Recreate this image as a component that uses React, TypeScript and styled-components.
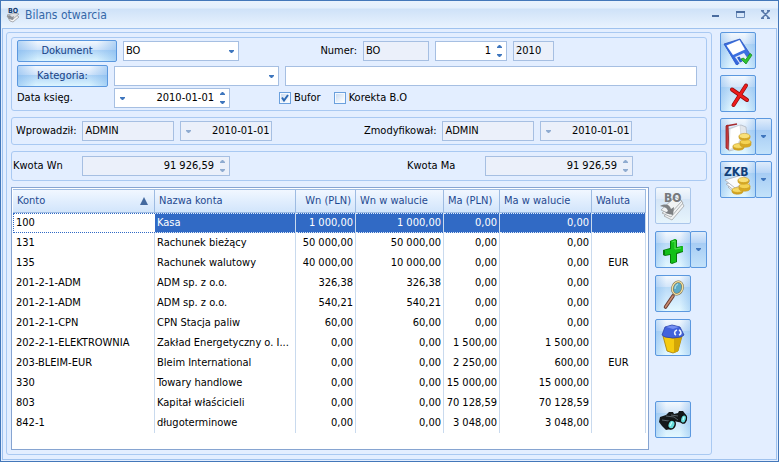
import React from "react";
import styled, { createGlobalStyle, css } from "styled-components";

const line = "#a9c9f2";
const fieldLine = "#a6bfe2";

const GlobalStyle = createGlobalStyle`
  *, *::before, *::after { box-sizing: border-box; }
  body { margin: 0; background: #e3eeff; }
  body, button, input, select, table {
    font-family: "DejaVu Sans Condensed", "DejaVu Sans", Tahoma, sans-serif;
    font-stretch: condensed;
    font-size: 11px;
    line-height: 14px;
    color: #000;
  }
`;

const Window = styled.main`
  display: flex;
  flex-direction: column;
  min-height: 100vh;
  border: 1px solid #4377b9;
  background: #e3eeff;
`;

const TitleBar = styled.header`
  display: flex;
  align-items: center;
  height: 27px;
  padding: 0 8px 0 5px;
  background: linear-gradient(#e9f2fd 0, #e3effc 7px, #cfe2f8 8px, #e9f3fe 100%);
`;

const Title = styled.h1`
  flex: 1;
  margin: 0 0 0 5px;
  font-size: 12px;
  line-height: 18px;
  font-weight: normal;
  color: #3468a8;
`;

const CaptionButton = styled.button`
  display: flex;
  width: 25px;
  height: 16px;
  padding: 0;
  justify-content: flex-end;
  align-items: center;
  border: 0;
  background: none;
`;

const Body = styled.div`
  flex: 1;
  display: flex;
  gap: 8px;
  margin: 0 1px 1px;
  padding: 3px 4px 4px 3px;
  border: 1px solid #9fc2ee;
`;

const Panel = styled.section`
  flex: 1;
  min-width: 0;
  display: flex;
  flex-direction: column;
  gap: 6px;
  padding: 4px;
  border: 1px solid ${line};
  border-radius: 3px;
`;

const Group = styled.div<{ $pad: string }>`
  padding: ${(p) => p.$pad};
  border: 1px solid ${line};
  border-radius: 3px;
`;

const Row = styled.div<{ $height?: number; $top?: number }>`
  display: flex;
  align-items: center;
  gap: 6px;
  height: ${(p) => p.$height ?? 20}px;
  margin-top: ${(p) => p.$top ?? 0}px;
`;

const Label = styled.label<{ $width: number; $right?: boolean; $indent?: number }>`
  flex: 0 0 ${(p) => p.$width}px;
  margin-left: ${(p) => p.$indent ?? 0}px;
  text-align: ${(p) => (p.$right ? "right" : "left")};
  white-space: nowrap;
`;

const glass = css`
  border: 1px solid #5b98df;
  border-radius: 2px;
  background:
    linear-gradient(90deg, rgba(120, 178, 236, 0.4) 0, rgba(120, 178, 236, 0) 30%, rgba(120, 178, 236, 0) 70%, rgba(120, 178, 236, 0.4) 100%),
    linear-gradient(#f4f9fe 0, #d4e6fa 30%, #b9daf7 31%, #cbe6fb 60%, #e3f8ff 100%);
`;

const TextButton = styled.button<{ $width: number }>`
  ${glass}
  flex: 0 0 ${(p) => p.$width}px;
  height: 22px;
  padding: 0;
  color: #173f85;
  background:
    linear-gradient(90deg, rgba(120, 178, 236, 0.5) 0, rgba(120, 178, 236, 0) 20%, rgba(120, 178, 236, 0) 80%, rgba(120, 178, 236, 0.5) 100%),
    linear-gradient(#f3f8fe 0, #cfe3fa 45%, #aed3f6 46%, #dcf5ff 100%);
`;

const Field = styled.div<{ $width?: number; $readOnly?: boolean }>`
  display: flex;
  align-items: stretch;
  flex: ${(p) => (p.$width ? `0 0 ${p.$width}px` : "1 1 0")};
  min-width: 0;
  height: 20px;
  border: 1px solid ${fieldLine};
  background: ${(p) => (p.$readOnly ? "#ebf0fa" : "#fff")};
  color: ${(p) => (p.$readOnly ? "#8fabd0" : "#3f76bd")};
`;

const Text = styled.input<{ $right?: boolean }>`
  flex: 1;
  width: 0;
  min-width: 0;
  padding: 0 2px;
  border: 0;
  background: none;
  text-align: ${(p) => (p.$right ? "right" : "left")};
  outline: none;
`;

const Choice = styled.select`
  grid-area: 1 / 1;
  width: 100%;
  padding: 0 16px 0 2px;
  border: 0;
  background: none;
  appearance: none;
  outline: none;
`;

const ChoiceField = styled(Field)`
  display: grid;
  grid-template: 1fr / 1fr;
  svg {
    grid-area: 1 / 1;
    place-self: center end;
    margin-right: 4px;
    pointer-events: none;
  }
`;

const DropButton = styled.button`
  display: flex;
  align-items: center;
  justify-content: center;
  width: 14px;
  padding: 0;
  border: 0;
  background: none;
  color: inherit;
`;

const Spin = styled.span`
  display: flex;
  flex-direction: column;
  justify-content: center;
  gap: 4px;
  width: 13px;
  color: inherit;
`;

const SpinButton = styled.button`
  display: flex;
  justify-content: center;
  height: 5px;
  align-items: center;
  padding: 0;
  border: 0;
  background: none;
  color: inherit;
`;

const Check = styled.label<{ $indent: number }>`
  display: flex;
  align-items: center;
  gap: 3px;
  margin-left: ${(p) => p.$indent}px;
  white-space: nowrap;
`;

const CheckBox = styled.input`
  appearance: none;
  width: 12px;
  height: 12px;
  margin: 0;
  border: 1px solid #6ba0dd;
  background: linear-gradient(135deg, #cbdcf1, #fff) content-box, #f4f9ff;
  padding: 1px;
`;

const CheckStack = styled.span`
  display: grid;
  > * { grid-area: 1 / 1; }
  svg { pointer-events: none; }
`;

const Lower = styled.div`
  flex: 1;
  display: flex;
  gap: 6px;
`;

const GridBox = styled.div`
  flex: 1;
  min-width: 0;
  padding: 1px 2px 0 1px;
  border: 1px solid #86a4d1;
  background: #fff;
`;

const Grid = styled.table`
  width: 100%;
  table-layout: fixed;
  border-collapse: separate;
  border-spacing: 0;
`;

const Head = styled.th<{ $right?: boolean }>`
  height: 24px;
  padding: 0 4px;
  border: solid #9dbbe2;
  border-width: 1px 1px 1px 0;
  background: linear-gradient(#f1f7ff, #deecfd 60%, #d2e5fb);
  color: #1f4990;
  font-weight: normal;
  text-align: ${(p) => (p.$right ? "right" : "left")};
  white-space: nowrap;
`;

const HeadSort = styled.span`
  display: flex;
  justify-content: space-between;
  align-items: center;
  padding-right: 2px;
`;

type Align = "left" | "right" | "center";

const Cell = styled.td<{ $align: Align; $state?: "focus" | "selected" }>`
  height: 20px;
  padding: ${(p) => (p.$align === "right" ? "0 2px 0 0" : "0 2px")};
  border-right: 1px solid #c9daee;
  text-align: ${(p) => p.$align};
  white-space: nowrap;
  overflow: hidden;
  text-overflow: ${(p) => (p.$align === "left" ? "ellipsis" : "clip")};
  &:first-child { padding-left: 3px; }
  ${(p) =>
    p.$state === "selected" &&
    css`
      background: #316ac5;
      color: #fff;
      border-top: 1px dotted #dce8f8;
      border-bottom: 1px dotted #dce8f8;
    `}
  ${(p) =>
    p.$state === "focus" &&
    css`
      border: 1px dotted #316ac5;
      border-right: 0;
      &:first-child { padding-left: 2px; }
    `}
`;

const SideColumn = styled.div`
  flex: 0 0 52px;
  display: flex;
  flex-direction: column;
  align-items: flex-start;
  gap: 7px;
  padding-bottom: 12px;
`;

const ActionColumn = styled.nav`
  flex: 0 0 52px;
  display: flex;
  flex-direction: column;
  align-items: flex-start;
  gap: 6px;
`;

const Split = styled.div<{ $last?: boolean }>`
  display: flex;
  margin-top: ${(p) => (p.$last ? "auto" : 0)};
`;

const IconButton = styled.button<{ $muted?: boolean }>`
  ${glass}
  display: flex;
  align-items: center;
  justify-content: center;
  width: 36px;
  height: 37px;
  padding: 0;
  ${(p) =>
    p.$muted &&
    css`
      border-color: #aac6ea;
      background: linear-gradient(#f3f8fd 0, #e0ebf8 30%, #d5e5f6 31%, #e6f4fc 100%);
    `}
`;

const SplitArrow = styled(IconButton)`
  width: 17px;
  margin-left: -1px;
  color: #3f76bd;
  background: linear-gradient(#dfecfb 0, #b9d6f7 30%, #a6ccf4 31%, #c3e2fa 100%);
`;

const Down = () => (
  <svg width="5" height="3" viewBox="0 0 5 3" fill="currentColor"><path d="M0 0h5v1L3 3H2L0 1z" /></svg>
);
const Up = () => (
  <svg width="5" height="3" viewBox="0 0 5 3" fill="currentColor"><path d="M0 3h5V2L3 0H2L0 2z" /></svg>
);

const Coins = () => (
  <g stroke="#c79c25" strokeWidth=".6">
    <path d="M10 26v2c1 3 10 3 11 0v-2z" fill="#d3a21b" />
    <ellipse cx="15.500" cy="26" rx="5.500" ry="2.400" fill="#f6da66" />
    <path d="M17 22v3c1 3 10 3 11 0v-3z" fill="#d9aa20" />
    <ellipse cx="22.500" cy="22" rx="5.500" ry="2.600" fill="#f4d353" />
    <path d="M16 16v2c1 3 10 3 11 0v-2z" fill="#d9aa20" />
    <ellipse cx="21.500" cy="16" rx="5.500" ry="2.600" fill="#f9e078" />
  </g>
);

const DiskIcon = () => (
  <svg width="32" height="32" viewBox="0 0 32 32">
    <path d="M2 9 18 4l10 15-13 11z" fill="#3c70e0" stroke="#2853bd" strokeWidth=".8" />
    <path d="m2 9 12 21 2-1L4 10z" fill="#3567d8" />
    <path d="M4.500 10.500 17.500 5 23 14.500 11 20z" fill="#fff" />
    <path d="m13 22 9-4 4 6-8 5z" fill="#e8eefb" />
    <path d="m15 22.500 2.500-1 3 5-2.500 1z" fill="#2c5fca" />
    <path d="m19 24 2.500-1 2 2L28 18.500l2 1.500-6 9z" fill="#2fc430" stroke="#168b20" strokeWidth=".8" />
  </svg>
);

const CrossIcon = () => (
  <svg width="32" height="32" viewBox="0 0 32 32" fill="none" strokeLinecap="round">
    <path d="M10 11.500 25 22" stroke="#8f0d0d" strokeWidth="4" />
    <path d="M24 7.500 11.500 27" stroke="#8f0d0d" strokeWidth="4" />
    <path d="M10 11.500 25 22" stroke="#ed1c1c" strokeWidth="2.600" />
    <path d="M24 7.500 11.500 27" stroke="#ed1c1c" strokeWidth="2.600" />
  </svg>
);

const BookIcon = () => (
  <svg width="32" height="32" viewBox="0 0 32 32">
    <path d="m6 8 13-4 5 2 2 19-19 5z" fill="#e3e7ec" stroke="#a9b0ba" strokeWidth=".7" />
    <path d="m4 5 2-1 1 25-3-2z" fill="#c63b3b" stroke="#8e1d22" strokeWidth=".8" />
    <path d="M4 5 15 3" stroke="#a62a2d" strokeWidth="1.500" />
    <path d="M7 29 8 8l10-4 1 12-4 9z" fill="#fff" stroke="#c6ccd4" strokeWidth=".6" />
    <g transform="translate(1 -1)"><Coins /></g>
  </svg>
);

const ZkbIcon = () => (
  <svg width="32" height="32" viewBox="0 0 32 32">
    <g stroke="#a4a9b2" strokeWidth=".8" fill="#fafcff">
      <path d="m6 23 15-6 7 6-14 7z" />
      <path d="m4 20 16-6 8 6-15 7z" />
      <path d="m3 16 17-5 8 6-15 7z" />
    </g>
    <Coins />
    <text x="2" y="12" fontFamily="DejaVu Sans" fontSize="12" fontWeight="bold" fill="#123f79">ZKB</text>
  </svg>
);

const BoIcon = () => (
  <svg width="32" height="32" viewBox="0 0 32 32">
    <g fill="#f1f3f4" stroke="#a0a3a6" strokeWidth=".8">
      <path d="m7 26 8 4 12-14-3-5z" />
      <path d="m5 23 9 4 12-14-3-4z" />
      <path d="m4 20 9 4 12-13-7-4z" />
    </g>
    <path d="M3 16c6-3 10-1 11 3l3-2-1 8-8-2 3-2c-1-3-3-4-8-5z" fill="#7d8083" />
    <text x="7" y="12" fontFamily="DejaVu Sans" fontSize="12" fontWeight="bold" fill="#76797c">BO</text>
  </svg>
);

const PlusIcon = () => (
  <svg width="32" height="32" viewBox="0 0 32 32">
    <path d="m13 7 5-2 2 1v7l5-1 1 1v5l-6 2v8l-5 2-2-1v-8l-5 1-2-1v-5l7-2z" fill="#087a0b" />
    <path d="m14 7 5-2v9l7-2v5l-7 2v9l-5 1v-9l-6 1v-5l6-1z" fill="#13c019" />
    <path d="m15 8 3-1v8l6-1" fill="none" stroke="#54df50" />
  </svg>
);

const LensIcon = () => (
  <svg width="32" height="32" viewBox="0 0 32 32">
    <path d="M16 18 8.500 29" stroke="#683d32" strokeWidth="3.600" strokeLinecap="round" />
    <path d="M16 18 8.500 29" stroke="#c98c70" strokeWidth="1.600" strokeLinecap="round" />
    <ellipse cx="20.500" cy="10" rx="5" ry="6.500" transform="rotate(20 20.500 10)" fill="#5aa9c6" stroke="#736849" strokeWidth="2.400" />
    <ellipse cx="20.500" cy="10" rx="5" ry="6.500" transform="rotate(20 20.500 10)" fill="none" stroke="#f0dfa0" strokeWidth="1.400" />
    <path d="M18 11c0-3 1-4 3-5" fill="none" stroke="#a4dbe8" strokeWidth="1.200" />
  </svg>
);

const BinIcon = () => (
  <svg width="32" height="32" viewBox="0 0 32 32">
    <path d="m6 14 10 2 9-2-4 15-5 2-6-2z" fill="#f5cb10" stroke="#a47c08" strokeWidth=".8" />
    <path d="m17 16 8-2-4 15-4 2z" fill="#d3a606" />
    <path d="M5 13 8 5l7-2 8 2 4 8-3 2-8 1-8-1z" fill="#4263dc" stroke="#2b41a5" strokeWidth=".8" />
    <path d="m9 5 6-1.500L22 5l-6 2z" fill="#7590f2" />
    <path d="M20 8c-3 1-3 4-1 5m3 0c3-1 2-4 0-5" fill="none" stroke="#eef5ff" strokeWidth="1.600" />
  </svg>
);

const BinocularsIcon = () => (
  <svg width="32" height="32" viewBox="0 0 32 32">
    <path d="m3 13 6-2 3-3h4l1 2 4-1 1-2h4l3 4 1 5-3 3-6-1-4-1-3 8-5 1-4-4-3-4z" fill="#14181b" />
    <path d="m9 12 8 1 4 3m-16 0 7 1 6 1m-4-7 7 1" fill="none" stroke="#59636a" strokeWidth="1" />
    <ellipse cx="14.500" cy="20.500" rx="3.600" ry="4.600" transform="rotate(20 14.500 20.500)" fill="#64dddd" stroke="#111" strokeWidth="1.500" />
    <ellipse cx="26.500" cy="15" rx="2.800" ry="4.200" transform="rotate(15 26.500 15)" fill="#64dddd" stroke="#111" strokeWidth="1.200" />
    <path d="m13 22 2-4m11-2 1-3" stroke="#c9ffff" strokeWidth="1.200" />
  </svg>
);

const AppIcon = () => (
  <svg width="14" height="16" viewBox="0 0 14 16">
    <path d="m1 9 8-2 4 3-6 5-3-1z" fill="#f4f4f4" stroke="#9a9da2" strokeWidth=".8" />
    <path d="m1 8 4 4 2 0 6-5-5-1z" fill="#dfe1e4" stroke="#9a9da2" strokeWidth=".8" />
    <path d="M1 9c3-2 4 0 5 1l2-1-1 4-4-1" fill="#8c9096" />
    <text x="2" y="6" fontFamily="DejaVu Sans" fontSize="7" fontWeight="bold" fill="#173e70">BO</text>
  </svg>
);

const Spinner = () => (
  <Spin>
    <SpinButton type="button" aria-label="Zwiększ"><Up /></SpinButton>
    <SpinButton type="button" aria-label="Zmniejsz"><Down /></SpinButton>
  </Spin>
);

type BoxProps = { id?: string; name: string; value: string; width?: number; readOnly?: boolean; right?: boolean; drop?: boolean; spin?: boolean };

const Box = ({ id, name, value, width, readOnly, right, drop, spin }: BoxProps) => (
  <Field $width={width} $readOnly={readOnly}>
    {drop && <DropButton type="button" aria-label="Kalendarz"><Down /></DropButton>}
    <Text id={id} aria-label={id ? undefined : name} defaultValue={value} readOnly={readOnly} $right={right} />
    {spin && <Spinner />}
  </Field>
);

const Tick = ({ label, checked, indent }: { label: string; checked?: boolean; indent: number }) => (
  <Check $indent={indent}>
    <CheckStack>
      <CheckBox type="checkbox" defaultChecked={checked} />
      {checked && (
        <svg width="12" height="12" viewBox="0 0 12 12"><path d="m3 5.500 2 3L9 3" fill="none" stroke="#2c69b4" strokeWidth="2" /></svg>
      )}
    </CheckStack>
    {label}
  </Check>
);

const ActionButton = ({ label, icon, split, muted, last }: { label: string; icon: React.ReactNode; split?: boolean; muted?: boolean; last?: boolean }) => (
  <Split $last={last}>
    <IconButton type="button" aria-label={label} $muted={muted} disabled={muted}>{icon}</IconButton>
    {split && <SplitArrow type="button" aria-label={`${label}: opcje`}><Down /></SplitArrow>}
  </Split>
);

const widths = [142, 141, 60, 88, 56, 92, 54];
const heads = ["Konto", "Nazwa konta", "Wn (PLN)", "Wn w walucie", "Ma (PLN)", "Ma w walucie", "Waluta"];
const aligns: Align[] = ["left", "left", "right", "right", "right", "right", "center"];
const rows = [
  ["100", "Kasa", "1 000,00", "1 000,00", "0,00", "0,00", ""],
  ["131", "Rachunek bieżący", "50 000,00", "50 000,00", "0,00", "0,00", ""],
  ["135", "Rachunek walutowy", "40 000,00", "10 000,00", "0,00", "0,00", "EUR"],
  ["201-2-1-ADM", "ADM sp. z o.o.", "326,38", "326,38", "0,00", "0,00", ""],
  ["201-2-1-ADM", "ADM sp. z o.o.", "540,21", "540,21", "0,00", "0,00", ""],
  ["201-2-1-CPN", "CPN Stacja paliw", "60,00", "60,00", "0,00", "0,00", ""],
  ["202-2-1-ELEKTROWNIA", "Zakład Energetyczny o. I...", "0,00", "0,00", "1 500,00", "1 500,00", ""],
  ["203-BLEIM-EUR", "Bleim International", "0,00", "0,00", "2 250,00", "600,00", "EUR"],
  ["330", "Towary handlowe", "0,00", "0,00", "15 000,00", "15 000,00", ""],
  ["803", "Kapitał właścicieli", "0,00", "0,00", "70 128,59", "70 128,59", ""],
  ["842-1", "długoterminowe", "0,00", "0,00", "3 048,00", "3 048,00", ""],
];

export default function App() {
  return (
    <>
      <GlobalStyle />
      <Window>
        <TitleBar>
          <AppIcon />
          <Title>Bilans otwarcia</Title>
          <CaptionButton type="button" aria-label="Minimalizuj">
            <svg width="9" height="9" viewBox="0 0 9 9"><path d="M1 5h7v2H1z" fill="#4a6c9f" /></svg>
          </CaptionButton>
          <CaptionButton type="button" aria-label="Maksymalizuj">
            <svg width="9" height="9" viewBox="0 0 9 9"><path d="M.5 1.500h8v6h-8z" fill="none" stroke="#6c8cb9" /><path d="M0 1h9v2H0z" fill="#4a6c9f" /></svg>
          </CaptionButton>
          <CaptionButton type="button" aria-label="Zamknij">
            <svg width="9" height="9" viewBox="0 0 9 9"><path d="m1 1 7 7M8 1 1 8M0 .7h3M6 .7h3M0 8.300h3M6 8.300h3" fill="none" stroke="#5777a8" strokeWidth="1.500" /></svg>
          </CaptionButton>
        </TitleBar>
        <Body>
          <Panel>
            <Group $pad="2px 9px 2px 5px">
              <Row $height={22}>
                <TextButton type="button" $width={100}>Dokument</TextButton>
                <ChoiceField $width={116}>
                  <Choice aria-label="Dokument" defaultValue="BO"><option>BO</option></Choice>
                  <Down />
                </ChoiceField>
                <Label htmlFor="series" $width={112} $right>Numer:</Label>
                <Box id="series" name="Seria" value="BO" width={66} readOnly />
                <Box name="Numer" value="1" width={72} right spin />
                <Box name="Rok" value="2010" width={41} readOnly />
              </Row>
              <Row $height={22} $top={3}>
                <TextButton type="button" $width={91}>Kategoria:</TextButton>
                <ChoiceField $width={165}>
                  <Choice aria-label="Kategoria" defaultValue=""><option value="" /></Choice>
                  <Down />
                </ChoiceField>
                <Box name="Opis kategorii" value="" />
              </Row>
              <Row $top={1}>
                <Label htmlFor="date" $width={91}>Data księg.</Label>
                <Box id="date" name="Data" value="2010-01-01" width={116} right drop spin />
                <Tick label="Bufor" checked indent={43} />
                <Tick label="Korekta B.O" indent={7} />
              </Row>
            </Group>
            <Group $pad="3px 4px">
              <Row>
                <Label htmlFor="created" $width={60}>Wprowadził:</Label>
                <Box id="created" name="Wprowadził" value="ADMIN" width={92} readOnly />
                <Box name="Data wprowadzenia" value="2010-01-01" width={92} readOnly right drop />
                <Label htmlFor="changed" $width={158} $right>Zmodyfikował:</Label>
                <Box id="changed" name="Zmodyfikował" value="ADMIN" width={92} readOnly />
                <Box name="Data modyfikacji" value="2010-01-01" width={92} readOnly right drop />
              </Row>
            </Group>
            <Group $pad="4px 1px">
              <Row>
                <Label htmlFor="debit" $width={63}>Kwota Wn</Label>
                <Box id="debit" name="Kwota Wn" value="91 926,59" width={148} readOnly right spin />
                <Label htmlFor="credit" $width={72} $indent={171}>Kwota Ma</Label>
                <Box id="credit" name="Kwota Ma" value="91 926,59" width={148} readOnly right spin />
              </Row>
            </Group>
            <Lower>
              <GridBox>
                <Grid>
                  <colgroup>{widths.map((w, i) => <col key={i} width={w} />)}</colgroup>
                  <thead>
                    <tr>
                      {heads.map((h, i) => (
                        <Head key={h} scope="col" $right={i === 2}>
                          {i === 0 ? (
                            <HeadSort>{h}<svg width="8" height="8" viewBox="0 0 8 8"><path d="M4 0 8 8H0z" fill="#44699f" /></svg></HeadSort>
                          ) : h}
                        </Head>
                      ))}
                    </tr>
                  </thead>
                  <tbody>
                    {rows.map((r, ri) => (
                      <tr key={ri}>
                        {r.map((c, i) => (
                          <Cell key={i} $align={aligns[i]} $state={ri === 0 ? (i === 0 ? "focus" : "selected") : undefined}>{c}</Cell>
                        ))}
                      </tr>
                    ))}
                  </tbody>
                </Grid>
              </GridBox>
              <SideColumn>
                <ActionButton label="Bilans otwarcia" icon={<BoIcon />} muted />
                <ActionButton label="Dodaj" icon={<PlusIcon />} split />
                <ActionButton label="Podgląd" icon={<LensIcon />} />
                <ActionButton label="Usuń" icon={<BinIcon />} />
                <ActionButton label="Szukaj" icon={<BinocularsIcon />} last />
              </SideColumn>
            </Lower>
          </Panel>
          <ActionColumn aria-label="Operacje">
            <ActionButton label="Zapisz" icon={<DiskIcon />} />
            <ActionButton label="Anuluj" icon={<CrossIcon />} />
            <ActionButton label="Księguj" icon={<BookIcon />} split />
            <ActionButton label="ZKB" icon={<ZkbIcon />} split />
          </ActionColumn>
        </Body>
      </Window>
    </>
  );
}
